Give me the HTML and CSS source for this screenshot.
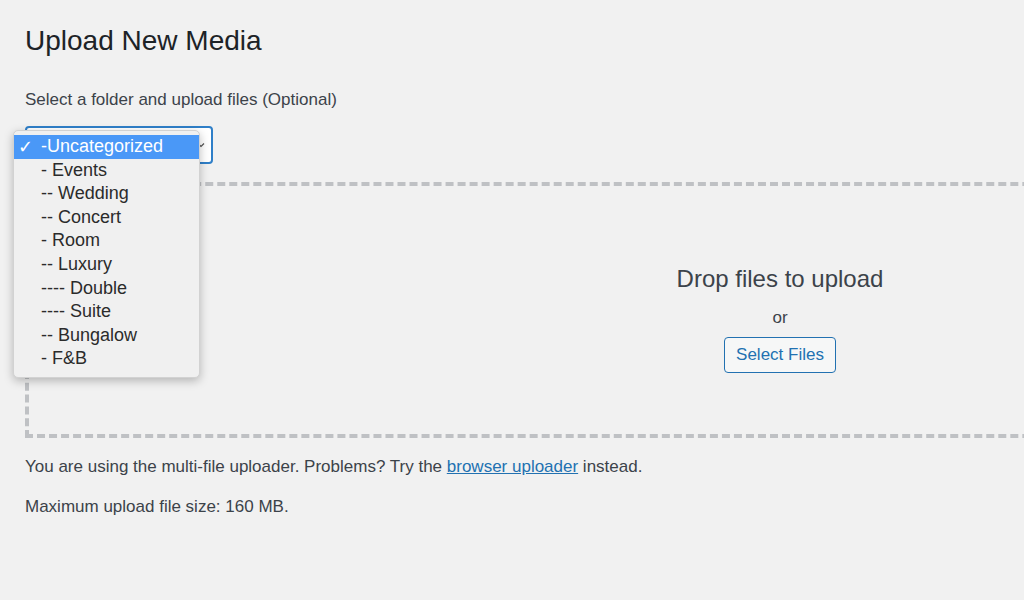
FILE: index.html
```html
<!DOCTYPE html>
<html>

<head>
    <meta charset="UTF-8">
    <title>Upload New Media</title>
    <link rel="stylesheet" href="styles.css">
</head>

<body>
    <div class="wrap">
        <h1 class="page-title">Upload New Media</h1>
        <p class="folder-label">Select a folder and upload files (Optional)</p>
        <div class="folder-select">
            <div class="select-box">
                <svg class="select-arrow" width="8" height="6" viewBox="0 0 8 6"><path d="M1 1.5l3 3 3-3" fill="none" stroke="#555" stroke-width="1.2"/></svg>
            </div>
            <ul class="select-menu">
                <li class="selected"><span class="check">&#10003;</span>-Uncategorized</li>
                <li>- Events</li>
                <li>-- Wedding</li>
                <li>-- Concert</li>
                <li>- Room</li>
                <li>-- Luxury</li>
                <li>---- Double</li>
                <li>---- Suite</li>
                <li>-- Bungalow</li>
                <li>- F&amp;B</li>
            </ul>
        </div>
        <div class="drop-area">
            <p class="drop-title">Drop files to upload</p>
            <p class="drop-or">or</p>
            <button class="button" type="button">Select Files</button>
        </div>
        <p class="uploader-note">You are using the multi-file uploader. Problems? Try the <a href="#">browser uploader</a> instead.</p>
        <p class="max-size">Maximum upload file size: 160 MB.</p>
    </div>
</body>

</html>
```

FILE: styles.css
```css
* {
    box-sizing: border-box;
}

html,
body {
    margin: 0;
    overflow: hidden;
}

body {
    background-color: #f1f1f1;
    color: #3c434a;
    font-family: "Liberation Sans", Arial, sans-serif;
    font-size: 17px;
    line-height: 23px;
}

.wrap {
    height: 600px;
    padding: 23px 0 0 25px;
    overflow: hidden;
}

.page-title {
    margin: 0;
    color: #1d2327;
    font-size: 28px;
    font-weight: 400;
    line-height: 35px;
}

.folder-label {
    margin: 30px 0 0;
}

.folder-select {
    position: relative;
    margin-top: 15px;
    width: 188px;
}

.select-box {
    display: flex;
    align-items: center;
    justify-content: flex-end;
    height: 38px;
    padding-right: 6px;
    border: 2px solid #2f7fc8;
    border-radius: 4px;
    background-color: #fff;
}

.select-menu {
    position: absolute;
    top: 4px;
    left: -12px;
    width: 187px;
    margin: 0;
    padding: 4px 0 6px;
    list-style: none;
    background-color: #f0f0f0;
    border: 1px solid #d2d2d2;
    border-radius: 5px;
    box-shadow: 0 3px 10px rgba(0, 0, 0, .25);
    color: #2b2b2b;
    font-size: 18px;
}

.select-menu li {
    position: relative;
    height: 23.6px;
    padding-left: 27px;
    line-height: 23.6px;
    white-space: nowrap;
}

.select-menu li.selected {
    background-color: #4a98f7;
    color: #fff;
}

.check {
    position: absolute;
    left: 4px;
    top: 0;
    font-family: "DejaVu Sans", sans-serif;
    font-size: 18px;
    font-weight: 700;
}

.drop-area {
    width: 1510px;
    height: 256px;
    margin-top: 18px;
    padding-top: 77px;
    border: 4px dashed #bfc1c4;
    text-align: center;
}

.drop-title {
    margin: 0;
    font-size: 24px;
    line-height: 32px;
}

.drop-or {
    margin: 11px 0 0;
}

.button {
    height: 36px;
    margin-top: 8px;
    padding: 0 11px;
    border: 1px solid #2271b1;
    border-radius: 4px;
    background-color: #f6f7f7;
    color: #2271b1;
    font-family: inherit;
    font-size: 17px;
}

.uploader-note {
    margin: 17px 0 0;
}

.uploader-note a {
    color: #2271b1;
}

.max-size {
    margin: 17px 0 0;
}
```
